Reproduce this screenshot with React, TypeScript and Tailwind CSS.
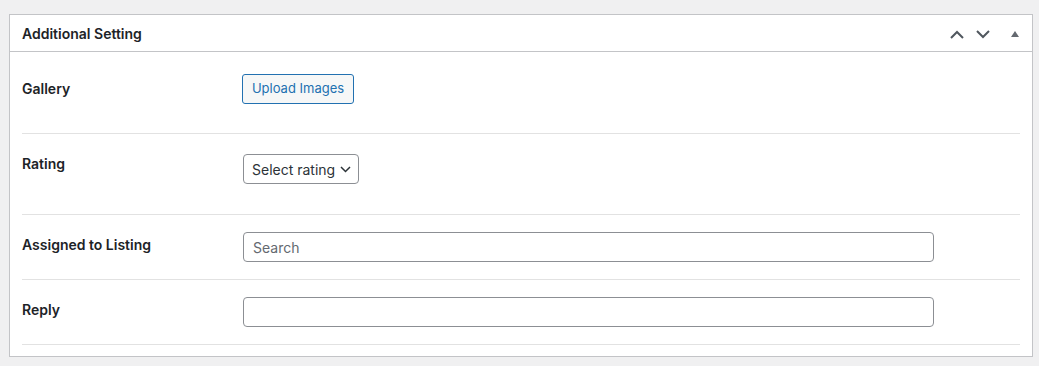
import React from "react";

const font = { fontFamily: 'Inter, "Noto Sans", "Liberation Sans", sans-serif' };

function Row({ label, labelPt, ctrlPt, h, children }: { label: string; labelPt: string; ctrlPt: string; h: string; children: React.ReactNode }) {
  return (
    <div className={`flex border-b border-[#e2e2e2] ${h}`}>
      <div className={`w-[221px] shrink-0 text-[14px] leading-[18px] font-semibold text-[#1d2327] ${labelPt}`}>{label}</div>
      <div className={`flex-1 ${ctrlPt}`}>{children}</div>
    </div>
  );
}

export default function App() {
  return (
    <div className="min-h-[366px] w-[1039px] bg-[#f0f0f1] pt-[14px] pl-[9px] pr-[6px]" style={font}>
      <div className="border border-[#c3c4c7] bg-white h-[343px]">
        <div className="flex h-[37px] items-center justify-between border-b border-[#c3c4c7] pl-[12px] pr-[13px]">
          <div className="text-[14px] font-semibold text-[#1d2327] pt-[1px]">Additional Setting</div>
          <div className="flex items-center pt-[2px]">
            <svg width="14" height="9" viewBox="0 0 14 9" className="mr-[12px]">
              <path d="M1 8 L7 2 L13 8" fill="none" stroke="#50575e" strokeWidth="2" />
            </svg>
            <svg width="14" height="9" viewBox="0 0 14 9" className="mr-[21px]">
              <path d="M1 1 L7 7 L13 1" fill="none" stroke="#50575e" strokeWidth="2" />
            </svg>
            <svg width="8" height="6" viewBox="0 0 8 6">
              <path d="M0 6 L4 0 L8 6 Z" fill="#646970" />
            </svg>
          </div>
        </div>
        <div className="px-[12px]">
          <Row label="Gallery" labelPt="pt-[28px]" ctrlPt="pt-[22px]" h="h-[82px]">
            <button className="h-[30px] w-[112px] -ml-[1px] rounded-[3px] border border-[#2271b1] bg-[#f6f7f7] text-[13px] text-[#2271b1]">
              Upload Images
            </button>
          </Row>
          <Row label="Rating" labelPt="pt-[21px]" ctrlPt="pt-[20px]" h="h-[81px]">
            <div className="flex h-[30px] w-[116px] items-center justify-between rounded-[4px] border border-[#8c8f94] pl-[8px] pr-[7px] text-[14px] text-[#2c3338]">
              <span>Select rating</span>
              <svg width="11" height="7" viewBox="0 0 11 7">
                <path d="M1 1 L5.5 5.5 L10 1" fill="none" stroke="#2c3338" strokeWidth="1.5" />
              </svg>
            </div>
          </Row>
          <Row label="Assigned to Listing" labelPt="pt-[21px]" ctrlPt="pt-[17px]" h="h-[65px]">
            <div className="flex h-[30px] w-[691px] items-center rounded-[4px] border border-[#8c8f94] pl-[9px] text-[14px] text-[#646970]">
              Search
            </div>
          </Row>
          <Row label="Reply" labelPt="pt-[21px]" ctrlPt="pt-[17px]" h="h-[65px]">
            <div className="h-[30px] w-[691px] rounded-[4px] border border-[#8c8f94]" />
          </Row>
        </div>
      </div>
    </div>
  );
}
